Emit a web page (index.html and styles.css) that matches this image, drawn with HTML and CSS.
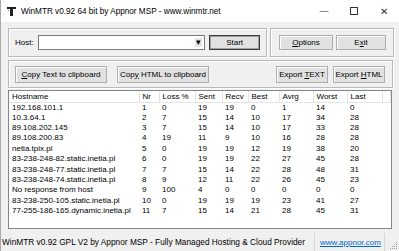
FILE: index.html
```html
<!DOCTYPE html>
<html lang="en">
  <head>
    <meta charset="UTF-8" />
    <title>WinMTR</title>
    <link rel="stylesheet" href="styles.css">
  </head>

  <body>
    <div class="window">
      <header class="titlebar">
        <svg class="app-icon" width="9" height="9" viewBox="0 0 9 9">
          <rect x="0" y="0" width="9" height="2" fill="#222" />
          <rect x="3" y="2" width="3" height="7" fill="#222" />
          <rect x="1" y="3" width="1" height="1" fill="#888" />
        </svg>
        <span class="title">WinMTR v0.92 64 bit by Appnor MSP - www.winmtr.net</span>
        <div class="controls">
          <span class="ctl">&#x2014;</span>
          <span class="ctl"><span class="max-box"></span></span>
          <span class="ctl close">&#x2715;</span>
        </div>
      </header>

      <div class="content">
        <div class="top-row">
          <div class="group host-group">
            <label class="host-label">Host:</label>
            <div class="combo">
              <span class="combo-arrow">&#x25BE;</span>
            </div>
            <button class="btn btn-default start-btn"><span>Start</span></button>
          </div>
          <div class="group opt-group">
            <button class="btn opt-btn"><span><u>O</u>ptions</span></button>
            <button class="btn exit-btn"><span>E<u>x</u>it</span></button>
          </div>
        </div>

        <div class="group export-group">
          <button class="btn copy-btn"><span><u>C</u>opy Text to clipboard</span></button>
          <button class="btn copy-btn"><span>Cop<u>y</u> HTML to clipboard</span></button>
          <span class="spacer"></span>
          <button class="btn export-btn"><span>Export <u>T</u>EXT</span></button>
          <button class="btn export-btn"><span>Export <u>H</u>TML</span></button>
        </div>

        <div class="list">
          <table class="hops">
            <colgroup>
              <col class="c-host" />
              <col class="c-nr" />
              <col class="c-loss" />
              <col class="c-sent" />
              <col class="c-recv" />
              <col class="c-best" />
              <col class="c-avrg" />
              <col class="c-worst" />
              <col class="c-last" />
              <col />
            </colgroup>
            <thead>
              <tr>
                <th>Hostname</th><th>Nr</th><th>Loss %</th><th>Sent</th><th>Recv</th>
                <th>Best</th><th>Avrg</th><th>Worst</th><th>Last</th><th></th>
              </tr>
            </thead>
            <tbody>
              <tr><td>192.168.101.1</td><td>1</td><td>0</td><td>19</td><td>19</td><td>0</td><td>1</td><td>14</td><td>0</td><td></td></tr>
              <tr><td>10.3.64.1</td><td>2</td><td>7</td><td>15</td><td>14</td><td>10</td><td>17</td><td>34</td><td>28</td><td></td></tr>
              <tr><td>89.108.202.145</td><td>3</td><td>7</td><td>15</td><td>14</td><td>10</td><td>17</td><td>33</td><td>28</td><td></td></tr>
              <tr><td>89.108.200.83</td><td>4</td><td>19</td><td>11</td><td>9</td><td>10</td><td>16</td><td>28</td><td>28</td><td></td></tr>
              <tr><td>netia.tpix.pl</td><td>5</td><td>0</td><td>19</td><td>19</td><td>12</td><td>19</td><td>38</td><td>20</td><td></td></tr>
              <tr><td>83-238-248-82.static.inetia.pl</td><td>6</td><td>0</td><td>19</td><td>19</td><td>22</td><td>27</td><td>45</td><td>28</td><td></td></tr>
              <tr><td>83-238-248-77.static.inetia.pl</td><td>7</td><td>7</td><td>15</td><td>14</td><td>22</td><td>28</td><td>48</td><td>31</td><td></td></tr>
              <tr><td>83-238-248-74.static.inetia.pl</td><td>8</td><td>9</td><td>12</td><td>11</td><td>22</td><td>26</td><td>45</td><td>23</td><td></td></tr>
              <tr><td>No response from host</td><td>9</td><td>100</td><td>4</td><td>0</td><td>0</td><td>0</td><td>0</td><td>0</td><td></td></tr>
              <tr><td>83-238-250-105.static.inetia.pl</td><td>10</td><td>0</td><td>19</td><td>19</td><td>19</td><td>23</td><td>41</td><td>27</td><td></td></tr>
              <tr><td>77-255-186-165.dynamic.inetia.pl</td><td>11</td><td>7</td><td>15</td><td>14</td><td>21</td><td>28</td><td>45</td><td>31</td><td></td></tr>
            </tbody>
          </table>
        </div>
      </div>

      <footer class="statusbar">
        <span class="status-text">WinMTR v0.92 GPL V2 by Appnor MSP - Fully Managed Hosting &amp; Cloud Provider</span>
        <span class="status-link"><a href="#">www.appnor.com</a></span>
        <svg class="grip" width="10" height="10" viewBox="0 0 10 10">
          <g fill="#a0a0a0">
            <rect x="8" y="2" width="1" height="1" />
            <rect x="6" y="4" width="1" height="1" />
            <rect x="8" y="4" width="1" height="1" />
            <rect x="4" y="6" width="1" height="1" />
            <rect x="6" y="6" width="1" height="1" />
            <rect x="8" y="6" width="1" height="1" />
            <rect x="2" y="8" width="1" height="1" />
            <rect x="4" y="8" width="1" height="1" />
            <rect x="6" y="8" width="1" height="1" />
            <rect x="8" y="8" width="1" height="1" />
          </g>
        </svg>
      </footer>
    </div>
  </body>
</html>
```

FILE: styles.css
```css
* {
  box-sizing: border-box;
  margin: 0;
  padding: 0;
}

body {
  width: 399px;
  height: 251px;
  overflow: hidden;
  background: #f0f0f0;
  font-family: "Liberation Sans", Arial, sans-serif;
  color: #000;
}

.window {
  width: 399px;
  height: 251px;
  display: flex;
  flex-direction: column;
  border-left: 1px solid #a8a8a8;
  background: #f0f0f0;
}

/* title bar */
.titlebar {
  height: 22px;
  background: #fff;
  display: flex;
  align-items: center;
  padding-left: 6px;
}
.app-icon {
  margin-right: 5px;
}
.title {
  font-size: 8.2px;
  color: #000;
  flex: 1;
}
.controls {
  display: flex;
  height: 100%;
}
.ctl {
  width: 30px;
  display: flex;
  align-items: center;
  justify-content: center;
  font-size: 9px;
  color: #333;
}
.ctl.close {
  font-size: 10px;
}
.max-box {
  width: 8px;
  height: 8px;
  border: 1px solid #333;
}

/* main area */
.content {
  flex: 1;
  display: flex;
  flex-direction: column;
  padding: 6px 6px 0 7px;
  gap: 3px;
}

.top-row {
  display: flex;
  gap: 3px;
}

.group {
  border: 1px solid #b9b9b9;
  box-shadow: inset 1px 1px 0 #fff, 1px 1px 0 #fff;
  display: flex;
  align-items: center;
}

.host-group {
  width: 259px;
  height: 29px;
  padding: 0 6px 0 6px;
}
.host-label {
  font-size: 8px;
  margin-right: 4px;
}
.combo {
  width: 168px;
  height: 15px;
  background: #fff;
  border: 1px solid #7a7a7a;
  display: flex;
  justify-content: flex-end;
  align-items: center;
  padding-right: 2px;
}
.combo-arrow {
  font-size: 9px;
  line-height: 9px;
  background: #e6e6e6;
  padding: 0 1px;
}

.opt-group {
  flex: 1;
  height: 29px;
  padding: 0 7px 0 8px;
  gap: 3px;
}

.btn {
  font-family: "Liberation Sans", Arial, sans-serif;
  font-size: 8px;
  height: 15px;
  background: #e1e1e1;
  border: 1px solid #adadad;
  box-shadow: inset 1px 1px 0 #fff;
  color: #000;
  display: flex;
  align-items: center;
  justify-content: center;
  white-space: nowrap;
}
.btn-default {
  border: 1px solid #3c3c3c;
  box-shadow: inset 0 0 0 1px #a0a0a0;
}
.start-btn {
  width: 51px;
  margin-left: 4px;
}
.opt-btn {
  width: 54px;
}
.exit-btn {
  width: 50px;
}

.export-group {
  height: 28px;
  padding: 0 7px 0 6px;
  gap: 10px;
}
.copy-btn {
  width: 92px;
  height: 17px;
}
.spacer {
  flex: 1;
}
.export-btn {
  width: 52px;
  height: 17px;
  margin-left: -5px;
}

/* hop list */
.list {
  flex: 1;
  margin-top: -1px;
  margin-right: 1px;
  margin-bottom: 4px;
  background: #fff;
  border: 1px solid #828790;
  overflow: hidden;
}

.hops {
  width: 100%;
  border-collapse: collapse;
  table-layout: fixed;
  font-size: 8px;
}
.c-host { width: 130px; }
.c-nr { width: 20px; }
.c-loss { width: 36px; }
.c-sent { width: 27px; }
.c-recv { width: 26px; }
.c-best { width: 31px; }
.c-avrg { width: 34px; }
.c-worst { width: 34px; }
.c-last { width: 35px; }

.hops th {
  font-weight: normal;
  text-align: left;
  height: 11px;
  padding: 0 3px;
  border-right: 1px solid #e5e5e5;
  border-bottom: 1px solid #e5e5e5;
  white-space: nowrap;
}
.hops td {
  height: 10.4px;
  line-height: 10px;
  padding: 0 3px;
  white-space: nowrap;
  overflow: hidden;
}

/* status bar */
.statusbar {
  height: 18px;
  display: flex;
  align-items: center;
  font-size: 8.3px;
  position: relative;
  white-space: nowrap;
}
.status-text {
  width: 314px;
  padding-left: 1px;
  height: 100%;
  display: flex;
  align-items: center;
  border-right: 1px solid #d7d7d7;
  overflow: hidden;
}
.status-link {
  padding-left: 5px;
  width: 70px;
  height: 100%;
  display: flex;
  align-items: center;
  border-right: 1px solid #d7d7d7;
}
.status-link a {
  color: #0066cc;
  font-size: 8px;
}
.grip {
  position: absolute;
  right: 1px;
  bottom: 1px;
}
```
